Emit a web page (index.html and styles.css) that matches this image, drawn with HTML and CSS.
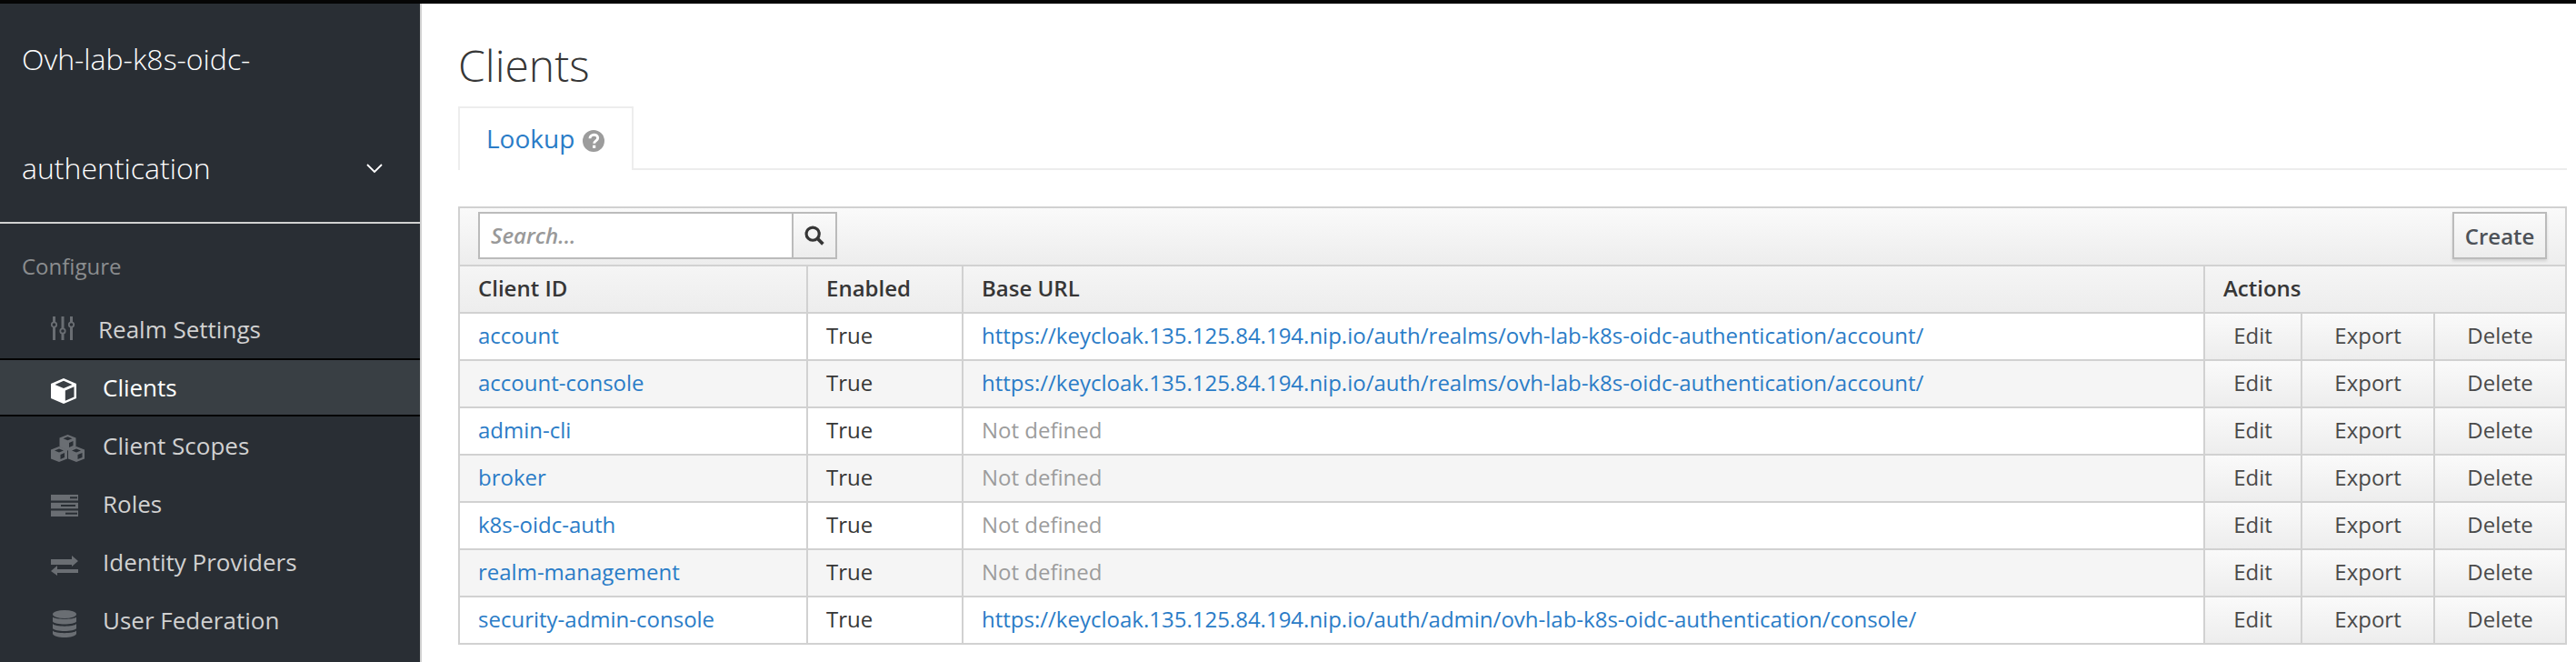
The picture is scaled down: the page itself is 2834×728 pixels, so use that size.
FILE: index.html
```html
<!DOCTYPE html>
<html lang="en">
<head>
<meta charset="utf-8">
<title>Clients</title>
<link rel="stylesheet" href="styles.css">
</head>
<body>
<div class="app">
  <aside class="sidebar">
    <div class="realm">
      <span class="realm-name">Ovh-lab-k8s-oidc-<br>authentication</span>
      <svg class="chevron" viewBox="0 0 18 11"><path d="M1 1l8 8 8-8" fill="none" stroke="currentColor" stroke-width="1.8"/></svg>
    </div>
    <div class="nav-title">Configure</div>
    <nav class="nav">
      <a class="nav-item">
        <svg class="ico ico-sliders" viewBox="0 0 26 26"><g fill="currentColor"><rect x="2" y="0" width="3" height="6"/><rect x="2" y="12" width="3" height="14"/><circle cx="3.500" cy="9" r="2.700" fill="none" stroke="currentColor" stroke-width="1.800"/><rect x="11.500" y="0" width="3" height="13"/><rect x="11.500" y="19" width="3" height="7"/><circle cx="13" cy="16" r="2.700" fill="none" stroke="currentColor" stroke-width="1.800"/><rect x="21" y="0" width="3" height="6"/><rect x="21" y="12" width="3" height="14"/><circle cx="22.500" cy="9" r="2.700" fill="none" stroke="currentColor" stroke-width="1.800"/></g></svg>
        <span>Realm Settings</span>
      </a>
      <a class="nav-item active">
        <svg class="ico ico-cube" viewBox="0 0 28 28"><path d="M14 0L28 6v16l-14 6L0 22V6z" fill="currentColor"/><path d="M14 2.800L23.500 7 14 11 4.500 7zM15.800 13.500l9.700-4.200v11.200l-9.700 4.300z" fill="#3a3f44"/></svg>
        <span>Clients</span>
      </a>
      <a class="nav-item">
        <svg class="ico ico-scopes" viewBox="0 0 37 30"><g fill="currentColor"><path d="M18.500 0l9 3.500v10l-9 4-9-4v-10z"/><path d="M9 13l9 3.500v10l-9 3.500-9-3.500v-10z"/><path d="M28 13l9 3.500v10l-9 3.500-9-3.500v-10z"/></g><g fill="#292e34"><path d="M18.500 2.200l5 2-5 2-5-2zM20 9l4.500-2v5l-4.500 2z"/><path d="M9 15.500l5 2-5 2-5-2zM10.500 22l4.500-2v5l-4.500 2z"/><path d="M28 15.500l5 2-5 2-5-2zM29.500 22l5-2v5l-5 2z"/></g></svg>
        <span>Client Scopes</span>
      </a>
      <a class="nav-item">
        <svg class="ico ico-roles" viewBox="0 0 30 24"><g fill="currentColor"><path d="M0 0h30v6.500H0z"/><path d="M0 8.800h30v6.500H0z"/><path d="M0 17.500h30V24H0z"/></g><g fill="#292e34"><rect x="21" y="2.300" width="8" height="2"/><rect x="11" y="11" width="16" height="2"/><rect x="16" y="19.700" width="13" height="2"/></g></svg>
        <span>Roles</span>
      </a>
      <a class="nav-item">
        <svg class="ico ico-idp" viewBox="0 0 30 22"><g fill="currentColor"><path d="M0 4h23V0l7 6-7 6v-2H0z"/><path d="M30 15H7v-4l-7 6 7 5v-3h23z"/></g></svg>
        <span>Identity Providers</span>
      </a>
      <a class="nav-item">
        <svg class="ico ico-db" viewBox="0 0 26 30"><g fill="currentColor"><ellipse cx="13" cy="4.500" rx="13" ry="4.500"/><path d="M0 7.500c2 3 24 3 26 0v5c-2 4-24 4-26 0z"/><path d="M0 15c2 3.500 24 3.500 26 0v5c-2 4-24 4-26 0z"/><path d="M0 22.500c2 3.500 24 3.500 26 0V26c-2 5.300-24 5.300-26 0z"/></g></svg>
        <span>User Federation</span>
      </a>
    </nav>
  </aside>
  <main class="content">
    <h1 class="page-title">Clients</h1>
    <div class="tabs">
      <a class="tab">Lookup<svg class="help" viewBox="0 0 18 18"><circle cx="9" cy="9" r="9" fill="#9c9c9c"/><path d="M6 7c0-4 6.500-4 6.500-.500 0 2.500-3 2.300-3 4.500" fill="none" stroke="#fff" stroke-width="2.200"/><rect x="8.300" y="12.500" width="2.400" height="2.400" fill="#fff"/></svg></a>
    </div>
    <table class="grid">
      <colgroup>
        <col class="c-id"><col class="c-en"><col class="c-url"><col class="c-a1"><col class="c-a2"><col class="c-a3">
      </colgroup>
      <thead>
        <tr class="toolbar-row">
          <th colspan="6">
            <div class="toolbar">
              <div class="search">
                <span class="search-input">Search...</span>
                <button class="search-btn"><svg viewBox="0 0 18 18" class="mag"><circle cx="7.500" cy="7.500" r="5.800" fill="none" stroke="currentColor" stroke-width="2.600"/><path d="M11.500 11.500l5.200 5.200" stroke="currentColor" stroke-width="3"/></svg></button>
              </div>
              <button class="create">Create</button>
            </div>
          </th>
        </tr>
        <tr class="head-row">
          <th>Client ID</th><th>Enabled</th><th>Base URL</th><th colspan="3">Actions</th>
        </tr>
      </thead>
      <tbody>
        <tr><td><a>account</a></td><td>True</td><td><a>https://keycloak.135.125.84.194.nip.io/auth/realms/ovh-lab-k8s-oidc-authentication/account/</a></td><td class="act">Edit</td><td class="act">Export</td><td class="act">Delete</td></tr>
        <tr><td><a>account-console</a></td><td>True</td><td><a>https://keycloak.135.125.84.194.nip.io/auth/realms/ovh-lab-k8s-oidc-authentication/account/</a></td><td class="act">Edit</td><td class="act">Export</td><td class="act">Delete</td></tr>
        <tr><td><a>admin-cli</a></td><td>True</td><td class="muted">Not defined</td><td class="act">Edit</td><td class="act">Export</td><td class="act">Delete</td></tr>
        <tr><td><a>broker</a></td><td>True</td><td class="muted">Not defined</td><td class="act">Edit</td><td class="act">Export</td><td class="act">Delete</td></tr>
        <tr><td><a>k8s-oidc-auth</a></td><td>True</td><td class="muted">Not defined</td><td class="act">Edit</td><td class="act">Export</td><td class="act">Delete</td></tr>
        <tr><td><a>realm-management</a></td><td>True</td><td class="muted">Not defined</td><td class="act">Edit</td><td class="act">Export</td><td class="act">Delete</td></tr>
        <tr><td><a>security-admin-console</a></td><td>True</td><td><a>https://keycloak.135.125.84.194.nip.io/auth/admin/ovh-lab-k8s-oidc-authentication/console/</a></td><td class="act">Edit</td><td class="act">Export</td><td class="act">Delete</td></tr>
      </tbody>
    </table>
  </main>
</div>
</body>
</html>
```
FILE: styles.css
```css
* { box-sizing: border-box; }
html, body { margin: 0; height: 100%; overflow: hidden; }
body { font-family: "Open Sans", sans-serif; background: #fff; color: #363636; border-top: 4px solid #050505; }
.app { display: flex; height: 724px; }
.sidebar { width: 464px; flex: none; background: #292e34; border-right: 2px solid #d1d1d1; color: #d1d1d1; }
.realm { display: flex; align-items: center; height: 242px; padding: 0 41px 0 24px; border-bottom: 2px solid #d1d1d1; color: #fff; }
.realm-name { flex: 1; font-size: 32px; font-weight: 300; line-height: 120px; margin-top: 2px; }
.chevron { width: 18px; height: 11px; align-self: flex-end; margin-bottom: 53px; }
.nav-title { font-size: 24px; color: #8b8d8f; padding: 29px 0 0 24px; line-height: 36px; height: 84px; }
.nav { display: flex; flex-direction: column; }
.nav-item { display: flex; align-items: center; height: 64px; padding-left: 56px; font-size: 26px; color: #d1d1d1; border-top: 2px solid transparent; border-bottom: 2px solid transparent; }
.nav-item.active { background: #393f44; color: #fff; border-color: #030303; }
.ico { flex: none; color: #6a6e73; }
.nav-item.active .ico { color: #fff; }
.ico-sliders { width: 26px; height: 26px; margin-right: 26px; margin-bottom: 2px; }
.ico-cube { width: 28px; height: 28px; margin-right: 29px; margin-top: 8px; }
.ico-scopes { width: 37px; height: 30px; margin-right: 20px; margin-top: 6px; }
.ico-roles { width: 30px; height: 24px; margin-right: 27px; margin-top: 4px; }
.ico-idp { width: 30px; height: 22px; margin-right: 27px; margin-top: 8px; }
.ico-db { width: 26px; height: 30px; margin: 7px 29px 0 2px; }
.content { flex: 1; padding: 0 10px 0 40px; min-width: 0; }
.page-title { margin: 0; font-size: 48px; font-weight: 300; color: #363636; height: 113px; padding-top: 38px; line-height: 60px; }
.tabs { height: 70px; border-bottom: 2px solid #ededed; display: flex; }
.tab { display: block; width: 193px; height: 70px; padding: 0 0 0 29px; border: 2px solid #ededed; border-bottom: 0; background: #fff; color: #2a7cc7; font-size: 28px; line-height: 66px; white-space: nowrap; }
.help { width: 24px; height: 24px; margin-left: 9px; vertical-align: -4px; }
.grid { width: 2320px; margin-top: 40px; table-layout: fixed; border-collapse: collapse; font-size: 24px; }
.c-id { width: 383px; } .c-en { width: 171px; } .c-url { width: 1366px; } .c-a1 { width: 107px; } .c-a2 { width: 146px; } .c-a3 { width: 145px; }
th, td { border: 2px solid #d1d1d1; padding: 0 20px 4px; height: 52px; text-align: left; white-space: nowrap; overflow: hidden; }
th { font-weight: 600; background: linear-gradient(#f5f5f5, #ededed); }
.toolbar-row th { height: 64px; padding: 0 20px 2px 20px; background: linear-gradient(#fafafa, #ededed); }
.toolbar { display: flex; justify-content: space-between; align-items: center; }
.search { display: flex; width: 395px; height: 52px; border: 2px solid #bbb; background: #fff; }
.search-input { flex: 1; font-style: italic; font-weight: 600; color: #999; padding-left: 12px; line-height: 48px; }
.search-btn { width: 48px; flex: none; padding: 0; border: 0; border-left: 2px solid #bbb; background: linear-gradient(#fafafa, #ededed); color: #363636; display: flex; align-items: center; justify-content: center; }
.mag { width: 22px; height: 22px; }
.create { width: 104px; height: 52px; padding: 0; font: 600 24px "Open Sans", sans-serif; color: #4d5258; border: 2px solid #bbb; background: linear-gradient(#fafafa, #ededed); box-shadow: 0 2px 3px rgba(3,3,3,.12); }
tbody tr:nth-child(even) td { background: #f5f5f5; }
td a { color: #2a7cc7; }
tbody td.muted { color: #9c9c9c; }
tbody tr td.act { padding: 0 0 4px; text-align: center; color: #4a4a4a; background: linear-gradient(#fafafa, #ededed); }
```
